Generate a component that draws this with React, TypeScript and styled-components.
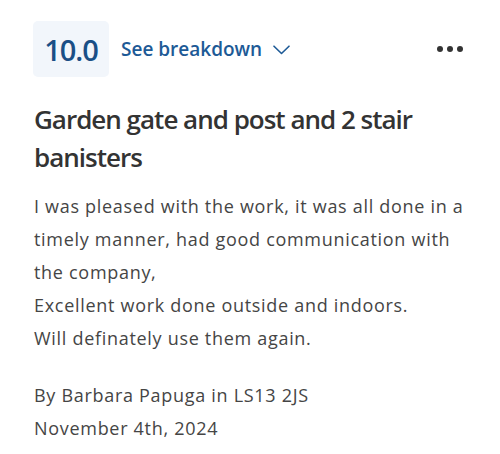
import { createGlobalStyle, styled } from 'styled-components';

const GlobalStyle = createGlobalStyle`
  html, body {
    margin: 0;
    padding: 0;
    background: #ffffff;
  }
  body {
    font-family: "Open Sans", "Noto Sans", sans-serif;
    -webkit-font-smoothing: antialiased;
  }
`;

const review = {
  score: '10.0',
  title: 'Garden gate and post and 2 stair banisters',
  body: [
    'I was pleased with the work, it was all done in a timely manner, had good communication with the company,',
    'Excellent work done outside and indoors.',
    'Will definately use them again.',
  ],
  author: 'Barbara Papuga',
  postcode: 'LS13 2JS',
  date: 'November 4th, 2024',
};

const App = () => {
  return (
    <>
      <GlobalStyle />
      <ReviewCard>
        <Header>
          <ScoreBox>{review.score}</ScoreBox>
          <BreakdownButton type="button">
            See breakdown
            <svg width="17" height="10" viewBox="0 0 17 10" fill="none">
              <path d="M1 1.2L8.5 8.5L16 1.2" stroke="#1d5a96" strokeWidth="1.6" strokeLinecap="round" strokeLinejoin="round" />
            </svg>
          </BreakdownButton>
          <MoreButton type="button" aria-label="More options">
            <Dot />
            <Dot />
            <Dot />
          </MoreButton>
        </Header>
        <Title>{review.title}</Title>
        <Body>
          {review.body.map((line) => (
            <p key={line}>{line}</p>
          ))}
        </Body>
        <Meta>
          <p>By {review.author} in {review.postcode}</p>
          <p>{review.date}</p>
        </Meta>
      </ReviewCard>
    </>
  );
};

const ReviewCard = styled.div`
  padding: 21px 28px 20px 34px;
  width: 500px;
  box-sizing: border-box;
`;

const Header = styled.div`
  display: flex;
  align-items: center;
  padding-right: 9px;
`;

const ScoreBox = styled.div`
  width: 76px;
  height: 56px;
  margin-left: -1px;
  display: flex;
  align-items: center;
  justify-content: center;
  background: #f2f6fb;
  border-radius: 5px;
  color: #1a4f86;
  font-size: 29px;
  font-weight: 600;
  letter-spacing: -1px;
`;

const BreakdownButton = styled.button`
  display: flex;
  align-items: center;
  gap: 11px;
  margin-left: 12px;
  padding: 0;
  border: none;
  background: none;
  color: #1d5a96;
  font-family: inherit;
  font-size: 19px;
  font-weight: 600;
  cursor: pointer;

  svg {
    margin-top: 2px;
  }
`;

const MoreButton = styled.button`
  margin-left: auto;
  display: flex;
  gap: 4px;
  padding: 0;
  border: none;
  background: none;
  cursor: pointer;
`;

const Dot = styled.span`
  width: 6px;
  height: 6px;
  border-radius: 50%;
  background: #333333;
`;

const Title = styled.h2`
  margin: 23px 0 0 0;
  color: #333333;
  font-size: 26px;
  line-height: 38px;
  font-weight: 600;
  letter-spacing: -1px;
`;

const Body = styled.div`
  margin-top: 14px;
  color: #454545;
  font-size: 18px;
  line-height: 33px;
  letter-spacing: 0.7px;

  p {
    margin: 0;
  }
`;

const Meta = styled(Body)`
  margin-top: 24px;
`;

export default App;
